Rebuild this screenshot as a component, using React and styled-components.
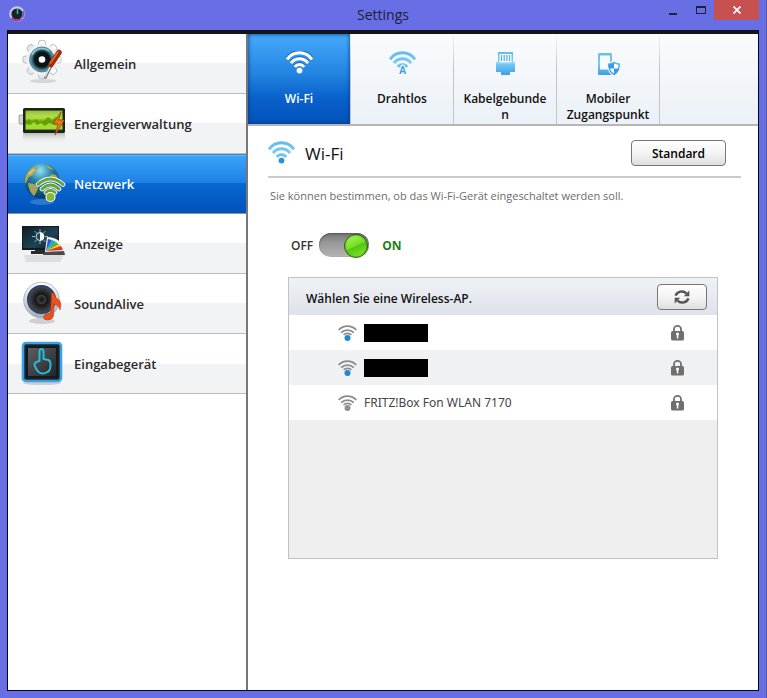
import { useState } from "react";
import styled, { createGlobalStyle } from "styled-components";

const GlobalStyle = createGlobalStyle`
  * {
    box-sizing: border-box;
  }
  body {
    margin: 0;
    background: #686fe4;
    font-family: "Open Sans", "Noto Sans", sans-serif;
    font-size: 12px;
    color: #333;
  }
  button {
    font-family: inherit;
    margin: 0;
    padding: 0;
    border: 0;
    background: none;
    cursor: pointer;
  }
  svg {
    display: block;
    flex-shrink: 0;
  }
`;

const Window = styled.div`
  display: flex;
  flex-direction: column;
  min-height: 100vh;
  padding: 0 7px 7px;
  background: #686fe4;
  border-right: 1px solid #5558a8;
`;

const TitleBar = styled.header`
  display: grid;
  grid-template-columns: 1fr auto 1fr;
  align-items: start;
  height: 30px;
`;

const AppIcon = styled.div`
  padding: 5px 1px;
`;

const WindowTitle = styled.h1`
  margin: 0;
  font-size: 14px;
  font-weight: 400;
  line-height: 30px;
  color: #20203c;
`;

const WindowButtons = styled.div`
  display: flex;
  justify-content: flex-end;
`;

const WindowButton = styled.button`
  display: flex;
  align-items: center;
  justify-content: center;
  width: ${(props) => (props.$close ? "45px" : "27px")};
  height: 20px;
  background: ${(props) => (props.$close ? "#c75050" : "transparent")};
`;

const Frame = styled.div`
  flex: 1;
  display: flex;
  border: 1px solid #05051c;
  border-top: 4px solid #14141c;
  background: white;
`;

const Sidebar = styled.nav`
  flex: 0 0 240px;
  border-right: 2px solid #777;
`;

const Menu = styled.ul`
  margin: 0;
  padding: 0;
  list-style: none;
`;

const MenuButton = styled.button`
  display: flex;
  align-items: center;
  gap: 8px;
  width: 100%;
  height: 60px;
  padding: 0 10px;
  border-bottom: 1px solid ${(props) => (props.$active ? "#8193ad" : "#b9bbbf")};
  background: ${(props) =>
    props.$active
      ? "linear-gradient(#3ea6fb, #1c80e4 50%, #0868d0 50%, #0150bb)"
      : "linear-gradient(#fff 50%, #f2f3f5 50%)"};
  box-shadow: ${(props) => (props.$active ? "inset 0 1px #4a82b5, inset 0 2px #5cb6ff" : "none")};
  color: ${(props) => (props.$active ? "#fff" : "#2a2a2a")};
  font-size: 13px;
  font-weight: 600;
  text-align: left;
`;

const Main = styled.main`
  flex: 1;
  min-width: 0;
`;

const Tabs = styled.div`
  display: flex;
  height: 92px;
  border-bottom: 2px solid #b4b6b9;
  background: linear-gradient(#fafbfd, #ebf1f7);
`;

const Tab = styled.button`
  display: flex;
  flex: 0 1 103px;
  flex-direction: column;
  align-items: center;
  gap: 16px;
  padding: 17px 9px 0;
  border-right: 1px solid;
  border-image: linear-gradient(#f4f6f8, #bfc3c8 40%, #c4c8cc) 1;
  background: ${(props) =>
    props.$active ? "linear-gradient(#47aafb, #2283e0 45%, #0b62cc 70%, #0152bc)" : "transparent"};
  box-shadow: ${(props) => (props.$active ? "inset 0 0 4px #06397c" : "none")};
  color: ${(props) => (props.$active ? "#fff" : "#111")};
  font-size: 12px;
  font-weight: 600;
  line-height: 16px;
`;

const TabLabel = styled.span`
  width: 100%;
  overflow-wrap: anywhere;
`;

const Content = styled.section`
  padding: 12px 17px 20px 20px;
`;

const Heading = styled.div`
  display: flex;
  align-items: center;
  gap: 10px;
  height: 40px;
  padding: 0 15px 8px 0;
  border-bottom: 2px solid #cacaca;
`;

const HeadingText = styled.h2`
  flex: 1;
  margin: 0;
  font-size: 17px;
  font-weight: 400;
  color: #111;
`;

const PushButton = styled.button`
  display: flex;
  align-items: center;
  justify-content: center;
  width: ${(props) => (props.$small ? "50px" : "95px")};
  height: 26px;
  border: 1px solid #777;
  border-radius: 4px;
  background: linear-gradient(#fff, #f4f4f4 50%, #dedede);
  color: #000;
  font-size: 12px;
  font-weight: 600;
`;

const Hint = styled.p`
  margin: 0;
  padding: 10px 2px 9px;
  font-size: 11px;
  line-height: 16px;
  color: #6c6c6c;
`;

const SwitchRow = styled.label`
  display: inline-flex;
  align-items: center;
  gap: 6px;
  margin: 20px 0 20px 23px;
  font-size: 12px;
  font-weight: 600;
  color: #333;
`;

const OnText = styled.span`
  padding-left: 7px;
  font-weight: 700;
  color: #1f7d1f;
`;

const Switch = styled.input`
  appearance: none;
  display: flex;
  width: 50px;
  height: 24px;
  margin: 0;
  padding: 1px;
  justify-content: ${(props) => (props.checked ? "flex-end" : "flex-start")};
  border-radius: 12px;
  background: linear-gradient(#777, #979797 40%, #b5b5b5);
  box-shadow: inset 0 1px 2px #555;
  cursor: pointer;

  &::before {
    content: "";
    width: 22px;
    height: 22px;
    border: 1px solid #27630f;
    border-radius: 50%;
    background: linear-gradient(155deg, #a2f04c 15%, #76dc2a 48%, #57c412 52%, #8cec38);
    box-shadow: inset 0 0 2px #3f9410;
  }
`;

const Panel = styled.div`
  min-height: 282px;
  margin: 0 23px 0 20px;
  border: 1px solid #bfc3c6;
  background: #efefef;
`;

const PanelHeader = styled.div`
  display: flex;
  align-items: center;
  justify-content: space-between;
  height: 37px;
  padding: 0 10px 0 17px;
  background: linear-gradient(#f0f2f5, #dde2ea);
`;

const PanelTitle = styled.h3`
  margin: 0;
  padding-top: 4px;
  font-size: 12px;
  font-weight: 600;
  color: #111;
`;

const NetworkList = styled.ul`
  margin: 0;
  padding: 0;
  list-style: none;
`;

const NetworkItem = styled.li`
  background: #fff;

  &:nth-child(even) {
    background: #f0f1f3;
  }
`;

const NetworkButton = styled.button`
  display: flex;
  align-items: center;
  gap: 7px;
  width: 100%;
  height: 35px;
  padding: 0 33px 0 49px;
  text-align: left;
`;

const NetworkName = styled.span`
  flex: 1;
  font-family: "Noto Sans", "Open Sans", sans-serif;
  font-size: 12px;
  color: #444;
`;

const HiddenName = styled.span`
  display: block;
  width: 64px;
  height: 18px;
  background: #000;
`;

const WifiArcs = ({ stroke }) => (
  <g fill="none" stroke={stroke} strokeWidth="3">
    <path d="M1 8.4A15 15 0 0 1 26 8.4" />
    <path d="M5 12.2A10.4 10.4 0 0 1 22 12.2" />
    <path d="M8.8 15.8A5.9 5.9 0 0 1 18.2 15.8" />
  </g>
);

const BlueFade = ({ id }) => (
  <defs>
    <linearGradient id={id} x1="0" y1="0" x2="0" y2="24" gradientUnits="userSpaceOnUse">
      <stop offset="0" stopColor="#62b9ea" />
      <stop offset=".5" stopColor="#7accf5" />
      <stop offset="1" stopColor="#3c9fe6" />
    </linearGradient>
  </defs>
);

const WifiIcon = ({ white }) => (
  <svg width="27" height="24" viewBox="0 0 27 24">
    <BlueFade id="wifiFade" />
    {white && (
      <g opacity="0.5" transform="translate(0 -1)">
        <WifiArcs stroke="#0b3f80" />
      </g>
    )}
    <WifiArcs stroke={white ? "#fff" : "url(#wifiFade)"} />
    <circle cx="13.5" cy="19.6" r="2.9" fill={white ? "#fff" : "#2b8fdc"} />
  </svg>
);

const WirelessIcon = () => (
  <svg width="27" height="24" viewBox="0 0 27 24">
    <BlueFade id="wirelessFade" />
    <WifiArcs stroke="url(#wirelessFade)" />
    <text
      x="13.5"
      y="23"
      textAnchor="middle"
      fontFamily="Liberation Sans"
      fontSize="10"
      fontWeight="700"
      fill="#3d9be0"
      stroke="#f4f8fb"
      strokeWidth="2"
      paintOrder="stroke"
    >
      A
    </text>
  </svg>
);

const CableIcon = () => (
  <svg width="27" height="24" viewBox="0 0 27 24">
    <BlueFade id="cableFade" />
    <path d="M6 1h15v10h2v10h-5v3H9v-3H4V11h2z" fill="url(#cableFade)" />
    <path d="M7.5 3h12v8.500h-12z" fill="#fff" />
    <path d="M9.500 4v6M12.200 4v6M14.900 4v6M17.500 4v6" stroke="#56aee8" strokeWidth="1.300" />
    <path d="M4 12h19" stroke="#9bdcfb" />
  </svg>
);

const HotspotIcon = () => (
  <svg width="27" height="24" viewBox="0 0 27 24">
    <BlueFade id="phoneFade" />
    <rect x="3" y="2" width="14" height="22" rx="1.500" fill="url(#phoneFade)" />
    <path d="M5 4.500h10v14H5z" fill="#f8fbfd" />
    <path
      d="M19 10.500c2 1.500 4 2 6 2 0 6-1.500 9.500-6 12-4.500-2.500-6-6-6-12 2 0 4-.5 6-2z"
      fill="#fff"
      stroke="#f2f6fa"
      strokeWidth="2"
    />
    <path
      d="M19 11.500c1.800 1.200 3.500 1.700 5.200 1.700 0 5-1.400 8.300-5.200 10.400-3.800-2.100-5.200-5.400-5.200-10.400 1.700 0 3.400-.5 5.200-1.700z"
      fill="#fff"
      stroke="#379be3"
      strokeWidth="1.200"
    />
    <path d="M19 12v5.500h-5c-.3-1.500-.4-2.900-.2-4.300 1.700 0 3.400-.3 5.200-1.200zM19 17.500h5c-.7 2.700-2.200 4.800-5 6z" fill="#379be3" />
  </svg>
);

const SignalIcon = ({ known }) => (
  <svg width="19" height="18" viewBox="0 0 19 18">
    <g fill="none" stroke="#8b8b8b" strokeWidth="1.800">
      <path d="M.7 6A12 12 0 0 1 18.300 6" />
      <path d="M3.200 8.600A9 9 0 0 1 15.800 8.600" />
      <path d="M5.600 10.900A6 6 0 0 1 13.400 10.900" />
    </g>
    <circle cx="9.500" cy="14" r="3" fill={known ? "#2385d6" : "#8f8f8f"} />
  </svg>
);

const LockIcon = () => (
  <svg width="13" height="16" viewBox="0 0 13 16">
    <path d="M3 7V4.200a3.500 3.300 0 0 1 7 0V7" fill="none" stroke="#6f6f6f" strokeWidth="1.800" />
    <rect y="6" width="13" height="9.500" rx="1.600" fill="#6f6f6f" />
    <circle cx="6.500" cy="9" r="1.500" fill="#fff" />
    <path d="M5.800 9h1.500v4.500H5.800z" fill="#fff" />
  </svg>
);

const RefreshIcon = () => (
  <svg width="16" height="16" viewBox="0 0 16 16">
    <g fill="none" stroke="#555" strokeWidth="2.500">
      <path d="M1.600 6.700C3 2.500 9 .9 12.400 4.300" />
      <path d="M14.400 9.300C13 13.500 7 15.100 3.600 11.700" />
    </g>
    <path d="M15.300 1.600v5.600H9.800zM.7 14.400V8.800h5.500z" fill="#555" />
  </svg>
);

const GeneralIcon = () => (
  <svg width="48" height="54" viewBox="0 0 48 54">
    <defs>
      <linearGradient id="gear" x2="0" y2="1">
        <stop stopColor="#fff" />
        <stop offset="1" stopColor="#e3e6e8" />
      </linearGradient>
      <radialGradient id="lens">
        <stop offset=".6" stopColor="#0d1418" />
        <stop offset=".75" stopColor="#2d5d68" />
        <stop offset="1" stopColor="#6db8c6" />
      </radialGradient>
    </defs>
    <ellipse cx="25" cy="44" rx="13" ry="2" fill="#aaa" opacity="0.400" />
    <g fill="url(#gear)" stroke="#bcc1c5" strokeWidth="1">
      {[0, 45, 90, 135].map((angle) => (
        <path key={angle} d="M20 9l1-5q3-1.500 6 0l1 5v27l-1 5q-3 1.500-6 0l-1-5z" transform={`rotate(${angle} 24 22.500)`} />
      ))}
    </g>
    <circle cx="24" cy="22.500" r="15.600" fill="#eff1f2" />
    <circle cx="24" cy="22.500" r="12.500" fill="url(#lens)" stroke="#3b6973" strokeWidth=".7" />
    <path d="M14 18a11 11 0 0 1 17-4" fill="none" stroke="#91d0db" strokeWidth="1.500" />
    <circle cx="24" cy="22.500" r="3.300" fill="#fff" />
    <path d="M34 27l-7 14.500" stroke="#777" strokeWidth="2.600" />
    <path d="M33.500 27L27 40" stroke="#eee" strokeWidth="1.200" />
    <path d="M41 15.500l-8 12" stroke="#a02b0d" strokeWidth="5.500" strokeLinecap="round" />
    <path d="M40 15l-7.500 11" stroke="#e26a38" strokeWidth="1.600" strokeLinecap="round" />
  </svg>
);

const BatteryIcon = () => (
  <svg width="48" height="54" viewBox="0 0 48 54">
    <defs>
      <linearGradient id="charge" x2="0" y2="1">
        <stop stopColor="#6da312" />
        <stop offset=".4" stopColor="#b4e232" />
        <stop offset=".6" stopColor="#5c9e0a" />
        <stop offset="1" stopColor="#b9ef31" />
      </linearGradient>
      <linearGradient id="batteryMirror" x2="0" y2="1">
        <stop stopColor="#8f9988" stopOpacity=".6" />
        <stop offset="1" stopColor="#fff" stopOpacity="0" />
      </linearGradient>
    </defs>
    <rect x="5" y="36" width="42" height="11" fill="url(#batteryMirror)" />
    <rect x="1" y="18" width="5" height="9" rx="1" fill="#d2d5d5" stroke="#777" strokeWidth=".6" />
    <rect x="5" y="11" width="42" height="25" rx="1.500" fill="#20251c" />
    <rect x="7.500" y="13.500" width="37" height="19" fill="url(#charge)" />
    <path d="M8 24l3-2 3 3 4-3 4 3 4-1 4-4 4 3 4-3 6 4v8H8z" fill="#659e0c" />
    <path d="M8 27l4 1 4-3 3 3 4-2 4 3 4-3 6 2 7-1v5H8z" fill="#a4d92d" />
    <path d="M8 14h36v4q-18 4-36 1z" fill="#d7ef97" opacity="0.350" />
    <path d="M43 15l-8 12h5l-3 11 9.500-15h-6z" fill="#e57719" stroke="#91400d" strokeWidth=".7" />
  </svg>
);

const NetworkIcon = () => (
  <svg width="48" height="54" viewBox="0 0 48 54">
    <defs>
      <radialGradient id="globe" cx=".45" cy=".2" r=".85">
        <stop stopColor="#90e2f2" />
        <stop offset=".4" stopColor="#237da5" />
        <stop offset="1" stopColor="#063455" />
      </radialGradient>
    </defs>
    <ellipse cx="24" cy="45" rx="12" ry="3" fill="#5798d8" opacity="0.500" />
    <circle cx="24" cy="24" r="17.500" fill="url(#globe)" />
    <path d="M9 16q4-6 8-7l3 2-3 3-2 4-4 2-2 4-2 3q-1-6 2-11zM10 26l6 1 4 4-2 5-2 3q-5-4-6-13zM29 8q5 2 7 5l-4-1-3-2zM33 17l5 1q3 4 2 8l-5-2-3-4z" fill="#a9a455" />
    <path d="M10 16l6-5 1 2-4 4-3 1z" fill="#ddd28a" opacity="0.700" />
    <g fill="none" strokeLinecap="round">
      <path d="M20 27.500q12.500-11 25 0M24 32q8.500-8 17 0M28 35.500q4.500-4 9 0" stroke="#fff" strokeWidth="4.600" />
      <path d="M20 27.500q12.500-11 25 0M24 32q8.500-8 17 0M28 35.500q4.500-4 9 0" stroke="#65a53b" strokeWidth="3" />
    </g>
    <circle cx="32.500" cy="40" r="4.500" fill="#86b936" stroke="#f3f8e9" strokeWidth="1.200" />
  </svg>
);

const DisplayIcon = () => (
  <svg width="48" height="54" viewBox="0 0 48 54">
    <defs>
      <linearGradient id="screen" x2="1" y2="1">
        <stop stopColor="#0c1e28" />
        <stop offset=".6" stopColor="#1c4554" />
        <stop offset="1" stopColor="#0b171d" />
      </linearGradient>
    </defs>
    <path d="M6 38h40l-4 7H8z" fill="#c8cacb" opacity="0.500" />
    <path d="M17 30h11v4h4v3H13v-3h4z" fill="#282b2d" />
    <rect x="4" y="9" width="37" height="24" fill="#17191b" />
    <rect x="5" y="10" width="35" height="21" fill="url(#screen)" />
    <path d="M22 12v3M22 23v4M14 19.500h3M27 19.500h3M16.500 14l2 2M16.500 25l2-2M27.500 14l-2 2M27.500 25l-2-2" stroke="#8fb3ba" />
    <circle cx="22" cy="19.500" r="4" fill="#224b58" stroke="#cce3e7" />
    <path d="M22 15.500a4 4 0 0 1 0 8z" fill="#fff" />
    <path d="M27 34l2-14q14 0 18 14v4H28z" fill="#f2f2f2" />
    <path d="M28 34l2-12 4 1z" fill="#315bc0" />
    <path d="M28 34l6-11 4 2z" fill="#1ba9cf" />
    <path d="M28 34l10-9 3 3z" fill="#56ad38" />
    <path d="M28 34l13-7 2 3z" fill="#edd426" />
    <path d="M28 34l15-5 2 4z" fill="#d93826" />
    <path d="M26 35l20-1 1 4H25z" fill="#4a4a4a" />
  </svg>
);

const SoundIcon = () => (
  <svg width="48" height="54" viewBox="0 0 48 54">
    <defs>
      <linearGradient id="chrome" x2="0" y2="1">
        <stop stopColor="#fff" />
        <stop offset="1" stopColor="#a5abb2" />
      </linearGradient>
      <radialGradient id="cone">
        <stop stopColor="#111" />
        <stop offset=".3" stopColor="#3b3d40" />
        <stop offset=".4" stopColor="#151617" />
        <stop offset="1" stopColor="#4b4e51" />
      </radialGradient>
    </defs>
    <ellipse cx="24" cy="44" rx="13" ry="3" fill="#999" opacity="0.400" />
    <circle cx="23.500" cy="23" r="17.800" fill="url(#chrome)" stroke="#999fa5" strokeWidth=".7" />
    <circle cx="23.500" cy="22.500" r="13.800" fill="url(#cone)" stroke="#253d7c" strokeWidth="1.500" />
    <path d="M33.500 16h2.500q1 5 5 7 3 3 1 10-1-5-6-6l-.5 12q-1 4-6 4-4 0-4-3 1-4 7-4z" fill="#e6511d" stroke="#a93310" strokeWidth=".5" />
  </svg>
);

const InputIcon = () => (
  <svg width="48" height="54" viewBox="0 0 48 54">
    <defs>
      <linearGradient id="pad" x2="1" y2="1">
        <stop stopColor="#5c5f63" />
        <stop offset="1" stopColor="#242529" />
      </linearGradient>
    </defs>
    <ellipse cx="24" cy="46" rx="19" ry="2" fill="#aaa" opacity="0.500" />
    <rect x="5" y="6" width="38" height="38" rx="3" fill="#1c252b" stroke="#3aa3e8" strokeWidth="2.600" />
    <rect x="8" y="9" width="32" height="32" rx="1" fill="#15191c" />
    <rect x="10" y="11" width="28" height="28" fill="url(#pad)" />
    <path
      d="M21.500 24v-9q0-3 2-3t2 3v7l5 1q2 1 2 4 0 7-3 8-5 3-9 0-3-3-4-7 0-3 5-4z"
      fill="none"
      stroke="#28bcd7"
      strokeWidth="2"
      strokeLinejoin="round"
    />
  </svg>
);

const menuItems = [
  { label: "Allgemein", icon: <GeneralIcon /> },
  { label: "Energieverwaltung", icon: <BatteryIcon /> },
  { label: "Netzwerk", icon: <NetworkIcon /> },
  { label: "Anzeige", icon: <DisplayIcon /> },
  { label: "SoundAlive", icon: <SoundIcon /> },
  { label: "Eingabegerät", icon: <InputIcon /> },
];

const networks = [
  { id: 1, known: true },
  { id: 2, known: true },
  { id: 3, name: "FRITZ!Box Fon WLAN 7170" },
];

const App = () => {
  const [section, setSection] = useState("Netzwerk");
  const [tab, setTab] = useState("Wi-Fi");
  const [enabled, setEnabled] = useState(true);

  const tabs = [
    { label: "Wi-Fi", icon: <WifiIcon white={tab === "Wi-Fi"} /> },
    { label: "Drahtlos", icon: <WirelessIcon /> },
    { label: "Kabelgebunden", icon: <CableIcon /> },
    { label: "Mobiler Zugangspunkt", icon: <HotspotIcon /> },
  ];

  return (
    <Window>
      <GlobalStyle />
      <TitleBar>
        <AppIcon>
          <svg width="18" height="18" viewBox="0 0 18 18">
            <circle cx="9" cy="9" r="6.700" fill="#17242b" stroke="#c5c9e2" strokeWidth="2.200" />
            <path d="M3.500 13q5 5 10 .5" fill="none" stroke="#a33b98" strokeWidth="2.200" />
            <path d="M15 6q1 4-1 7" fill="none" stroke="#7c60b0" strokeWidth="2" />
            <path d="M9.500 4v5" stroke="#35b4a4" strokeWidth="1.500" />
          </svg>
        </AppIcon>
        <WindowTitle>Settings</WindowTitle>
        <WindowButtons>
          <WindowButton aria-label="Minimieren">
            <svg width="9" height="9" viewBox="0 0 9 9">
              <path d="M0 7h8v2H0z" fill="#20203c" />
            </svg>
          </WindowButton>
          <WindowButton aria-label="Maximieren">
            <svg width="10" height="8" viewBox="0 0 10 8">
              <path d="M0 0h10v8H0zM1 2v5h8V2z" fill="#20203c" fillRule="evenodd" />
            </svg>
          </WindowButton>
          <WindowButton $close aria-label="Schließen">
            <svg width="8" height="8" viewBox="0 0 8 8">
              <path d="M.5 .5l7 7M7.500 .5l-7 7" stroke="#fff" strokeWidth="1.700" />
            </svg>
          </WindowButton>
        </WindowButtons>
      </TitleBar>
      <Frame>
        <Sidebar>
          <Menu>
            {menuItems.map((item) => (
              <li key={item.label}>
                <MenuButton $active={item.label === section} onClick={() => setSection(item.label)}>
                  {item.icon}
                  {item.label}
                </MenuButton>
              </li>
            ))}
          </Menu>
        </Sidebar>
        <Main>
          <Tabs role="tablist">
            {tabs.map((item) => (
              <Tab
                key={item.label}
                role="tab"
                aria-selected={item.label === tab}
                $active={item.label === tab}
                onClick={() => setTab(item.label)}
              >
                {item.icon}
                <TabLabel>{item.label}</TabLabel>
              </Tab>
            ))}
          </Tabs>
          <Content>
            <Heading>
              <WifiIcon />
              <HeadingText>Wi-Fi</HeadingText>
              <PushButton>Standard</PushButton>
            </Heading>
            <Hint>Sie können bestimmen, ob das Wi-Fi-Gerät eingeschaltet werden soll.</Hint>
            <SwitchRow>
              OFF
              <Switch type="checkbox" role="switch" checked={enabled} onChange={() => setEnabled(!enabled)} />
              <OnText>ON</OnText>
            </SwitchRow>
            <Panel>
              <PanelHeader>
                <PanelTitle>Wählen Sie eine Wireless-AP.</PanelTitle>
                <PushButton $small aria-label="Aktualisieren">
                  <RefreshIcon />
                </PushButton>
              </PanelHeader>
              <NetworkList>
                {networks.map((network) => (
                  <NetworkItem key={network.id}>
                    <NetworkButton>
                      <SignalIcon known={network.known} />
                      <NetworkName>{network.name || <HiddenName />}</NetworkName>
                      <LockIcon />
                    </NetworkButton>
                  </NetworkItem>
                ))}
              </NetworkList>
            </Panel>
          </Content>
        </Main>
      </Frame>
    </Window>
  );
};

export default App;
